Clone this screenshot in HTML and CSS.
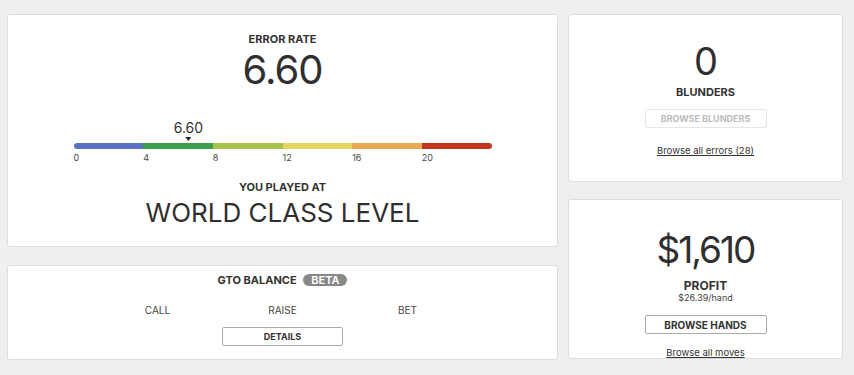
FILE: index.html
```html
<!DOCTYPE html>
<html lang="en">
<head>
  <meta charset="UTF-8" />
  <meta name="viewport" content="width=device-width, initial-scale=1.0"/>
  <title>Session Summary</title>
  <link rel="stylesheet" href="styles.css">
</head>
<body>

  <div class="dashboard">

    <!-- Left column -->
    <div class="column">

      <!-- Error rate -->
      <section class="card card-error">
        <h3 class="label">ERROR RATE</h3>
        <div class="big-value">6.60</div>

        <div class="scale">
          <div class="scale-marker" style="left: 27.5%">
            <span>6.60</span>
            <i class="caret"></i>
          </div>
          <div class="scale-bar">
            <span class="seg seg-1"></span>
            <span class="seg seg-2"></span>
            <span class="seg seg-3"></span>
            <span class="seg seg-4"></span>
            <span class="seg seg-5"></span>
            <span class="seg seg-6"></span>
          </div>
          <div class="scale-ticks">
            <span>0</span>
            <span>4</span>
            <span>8</span>
            <span>12</span>
            <span>16</span>
            <span>20</span>
          </div>
        </div>

        <h3 class="label label-played">YOU PLAYED AT</h3>
        <div class="level">WORLD CLASS LEVEL</div>
      </section>

      <!-- GTO balance -->
      <section class="card card-gto">
        <h3 class="label">GTO BALANCE <span class="badge">BETA</span></h3>
        <div class="actions">
          <span>CALL</span>
          <span>RAISE</span>
          <span>BET</span>
        </div>
        <button class="btn btn-details">DETAILS</button>
      </section>
    </div>

    <!-- Right column -->
    <div class="column column-side">

      <!-- Blunders -->
      <section class="card card-blunders">
        <div class="big-value">0</div>
        <h3 class="label">BLUNDERS</h3>
        <button class="btn btn-disabled" disabled>BROWSE BLUNDERS</button>
        <a href="#" class="link link-errors">Browse all errors (28)</a>
      </section>

      <!-- Profit -->
      <section class="card card-profit">
        <div class="big-value">$1,610</div>
        <h3 class="label label-profit">PROFIT</h3>
        <div class="per-hand">$26.39/hand</div>
        <button class="btn btn-hands">BROWSE HANDS</button>
        <a href="#" class="link link-moves">Browse all moves</a>
      </section>
    </div>

  </div>

</body>
</html>
```

FILE: styles.css
```css
* {
  box-sizing: border-box;
}
body, html {
  margin: 0;
  padding: 0;
  font-family: 'Inter', 'Liberation Sans', sans-serif;
  background-color: #efeff0;
  color: #333;
}

.dashboard {
  display: grid;
  grid-template-columns: 551px 275px;
  gap: 10px;
  padding: 14px 11px 0 7px;
}

.column {
  display: flex;
  flex-direction: column;
  gap: 18px;
}
.column-side {
  gap: 17px;
}

.card {
  background-color: #ffffff;
  border: 1px solid #dcdcdc;
  border-radius: 3px;
  display: flex;
  flex-direction: column;
  align-items: center;
  overflow: hidden;
}
.card > * {
  flex-shrink: 0;
}

.label {
  margin: 0;
  font-size: 11px;
  line-height: 13px;
  font-weight: 700;
  color: #333;
}

.big-value {
  font-size: 40px;
  line-height: 40px;
  font-weight: 400;
  letter-spacing: -1px;
  color: #2f2f2f;
}

/* Error rate card */
.card-error {
  height: 233px;
  padding-top: 18px;
}
.card-error .big-value {
  margin-top: 4px;
}

.scale {
  position: relative;
  width: 418px;
  margin-top: 30px;
  padding-top: 23px;
}
.scale-marker {
  position: absolute;
  top: 0;
  transform: translateX(-50%);
  display: flex;
  flex-direction: column;
  align-items: center;
  font-size: 14px;
  line-height: 16px;
}
.caret {
  margin-top: 1px;
  width: 0;
  height: 0;
  border-left: 3px solid transparent;
  border-right: 3px solid transparent;
  border-top: 4px solid #222;
}
.scale-bar {
  display: flex;
  height: 6px;
  border-radius: 3px;
  overflow: hidden;
}
.seg {
  flex: 1;
}
.seg-1 { background: #5b72c4; }
.seg-2 { background: #3c9d4b; }
.seg-3 { background: #a7c24d; }
.seg-4 { background: #e7d45f; }
.seg-5 { background: #e9a954; }
.seg-6 { background: #c1361f; }

.scale-ticks {
  display: grid;
  grid-template-columns: repeat(6, 1fr);
  margin-top: 3px;
  font-size: 9px;
  line-height: 11px;
  color: #444;
}

.label-played {
  margin-top: 18px;
}
.level {
  margin-top: 4px;
  font-size: 26px;
  line-height: 30px;
  color: #2f2f2f;
}

/* GTO card */
.card-gto {
  height: 95px;
  padding-top: 8px;
}
.badge {
  display: inline-block;
  margin-left: 4px;
  padding: 0 8px;
  border-radius: 6px;
  background: #888;
  color: #fff;
  font-size: 11px;
  line-height: 12px;
  font-weight: 600;
}
.actions {
  display: grid;
  grid-template-columns: repeat(3, 125px);
  justify-items: center;
  margin-top: 17px;
  font-size: 10px;
  line-height: 12px;
  color: #444;
}

.btn {
  width: 122px;
  height: 19px;
  padding: 0;
  background: #fff;
  border: 1px solid #aaa;
  border-radius: 2px;
  font-family: inherit;
  font-size: 9px;
  font-weight: 700;
  color: #333;
  cursor: pointer;
}
.btn-details {
  margin-top: 11px;
  width: 121px;
}
.btn-disabled {
  margin-top: 10px;
  border-color: #e6e6e6;
  color: #bbb;
  cursor: default;
}
.btn-hands {
  margin-top: 12px;
  font-size: 10px;
}

.link {
  font-size: 9.5px;
  line-height: 12px;
  color: #333;
}

/* Blunders card */
.card-blunders {
  height: 168px;
  padding-top: 26px;
}
.card-blunders .big-value {
  font-size: 38px;
}
.card-blunders .label {
  margin-top: 5px;
}
.link-errors {
  margin-top: 17px;
}

/* Profit card */
.card-profit {
  height: 160px;
  padding-top: 30px;
}
.card-profit .big-value {
  font-size: 37px;
  letter-spacing: -2px;
}
.label-profit {
  margin-top: 10px;
  font-size: 12px;
  line-height: 12px;
}
.per-hand {
  margin-top: 1px;
  font-size: 9px;
  line-height: 10px;
  color: #444;
}
.link-moves {
  margin-top: 13px;
  line-height: 11px;
}
```
